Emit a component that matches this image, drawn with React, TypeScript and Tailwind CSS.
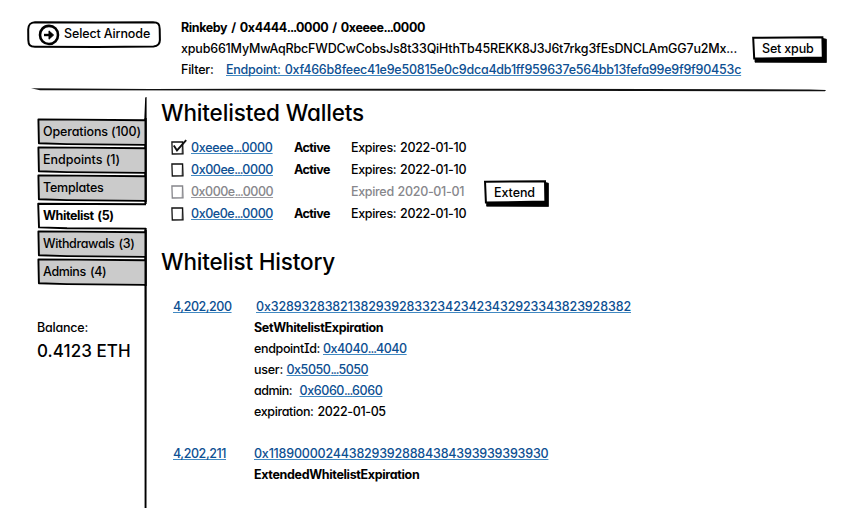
import type { ReactNode } from "react";

// Shortened hashes keep their dots tighter than the digits around them.
function Short({ children }: { children: string }) {
  return (
    <>
      {children.split("...").map((part, i) => (
        <span key={i}>
          {i > 0 && <span className="tracking-[-1.1px]">...</span>}
          {part}
        </span>
      ))}
    </>
  );
}

function Link({ children, className = "" }: { children: ReactNode; className?: string }) {
  return (
    <a
      className={`text-[#0d4f92] underline decoration-[#4189c2] decoration-1 underline-offset-[1px] [text-decoration-skip-ink:none] ${className}`}
    >
      {children}
    </a>
  );
}

function ArrowIcon() {
  return (
    <svg className="h-[22px] w-[22px] shrink-0" viewBox="0 0 22 22" fill="none" stroke="#000">
      <path d="M11 1.9C16.2 1.9 20 5.7 20 10.9C20 16 16.2 20 11 20C5.9 20 2 16.2 2 11C2 5.8 5.8 1.9 11 1.9Z" strokeWidth="2.6" />
      <path d="M6 11H14" strokeWidth="2.4" />
      <path d="M11 6.9L15.6 11L11 15.2Z" fill="#000" strokeWidth="1" strokeLinejoin="round" />
    </svg>
  );
}

function SketchButton({ children, className = "" }: { children: ReactNode; className?: string }) {
  return (
    <button className={`relative flex h-[27px] items-start ${className}`}>
      <svg className="absolute inset-0 h-full w-full" viewBox="0 0 75 27" preserveAspectRatio="none">
        <path d="M3 21L70 22L71 2.5L74.4 3.2V26.5L3 26.2Z" fill="#000" stroke="#000" strokeWidth="0.8" />
        <path d="M1.2 1.8L70.4 1.3L70.8 21.6L2.2 22.6Z" fill="#fff" stroke="#000" strokeWidth="2" vectorEffect="non-scaling-stroke" />
      </svg>
      <span className="relative top-px leading-[24px]">{children}</span>
    </button>
  );
}

function Tab({ label, active = false, className }: { label: string; active?: boolean; className: string }) {
  return (
    <div className="relative h-[28px]">
      <svg className="absolute inset-0 h-[28px] w-[112px]" viewBox="0 0 112 28">
        {active ? (
          <>
            <rect x="106" y="2" width="6" height="24" fill="#fff" />
            <path d="M109 2.2L1.2 1.8L2 25.4L30 26.2L109 26.6" fill="#fff" stroke="#000" strokeWidth="1.9" strokeLinejoin="round" />
          </>
        ) : (
          <>
            <path d="M108 2.2L40 1.6L1.4 1.4L1.9 25.2L30 26.1L108 26.9" fill="#cbcbcb" stroke="#000" strokeWidth="1.9" strokeLinejoin="round" />
            <path d="M108.6 0V28" stroke="#000" strokeWidth="2.2" />
          </>
        )}
      </svg>
      <span className={`relative block pl-[6px] leading-[28px] ${className}`}>{label}</span>
    </div>
  );
}

function Checkbox({ checked = false, muted = false }: { checked?: boolean; muted?: boolean }) {
  return (
    <svg className="h-[18px] w-[20px] shrink-0" viewBox="0.6 0 20 18" fill="none" stroke={muted ? "#85858a" : "#111"}>
      <path d="M1.5 5L12.2 4.8L12.6 16.8L1.9 17Z" strokeWidth="1.3" />
      <path d="M12 5L11.6 17" strokeWidth="0.6" />
      {checked && <path d="M3.4 8.4L6.6 13.4L15.8 3.2" strokeWidth="1.9" />}
    </svg>
  );
}

const wallets = [
  { id: "0xeeee...0000", active: true, checked: true, expiry: "Expires: 2022-01-10", tracking: "tracking-[-0.29px]" },
  { id: "0x00ee...0000", active: true, checked: false, expiry: "Expires: 2022-01-10", tracking: "tracking-[-0.43px]" },
  { id: "0x000e...0000", active: false, checked: false, expiry: "Expired 2020-01-01", tracking: "tracking-[-0.49px]" },
  { id: "0x0e0e...0000", active: true, checked: false, expiry: "Expires: 2022-01-10", tracking: "tracking-[-0.43px]" },
];

export default function App() {
  return (
    <div className="flex h-[508px] w-[866px] flex-col overflow-hidden bg-white font-['Inter','Liberation_Sans',sans-serif] text-[12.5px] leading-[21px] font-medium whitespace-nowrap text-black [font-feature-settings:'cv11']">
      <header className="flex h-[88px] shrink-0 items-start pl-[27px]">
        <button className="relative mt-[21px] flex h-[27px] w-[134px] items-center pl-[10.5px]">
          <svg className="absolute inset-0 h-[27px] w-[134px]" viewBox="0 0 134 27" fill="none" stroke="#000" strokeWidth="2">
            <path d="M8 1.2L70 1.6L126 1.2C131 1.3 132.8 3 132.7 8L132.9 19C132.8 23.5 131 25.2 126.5 25.4L70 26L8 25.8C3 25.7 1.4 24 1.3 19L1.2 8.5C1.4 3.5 3 1.4 8 1.2Z" />
          </svg>
          <ArrowIcon />
          <span className="relative -top-px ml-[4.5px] leading-[25px] tracking-[-0.13px]">Select Airnode</span>
        </button>
        <div className="mt-[17px] ml-[20px] w-[571px]">
          <div className="font-bold tracking-[-0.4px] [word-spacing:1.5px]">
            <Short>Rinkeby / 0x4444...0000 / 0xeeee...0000</Short>
          </div>
          <div className="tracking-[-0.185px]">xpub661MyMwAqRbcFWDCwCobsJs8t33QiHthTb45REKK8J3J6t7rkg3fEsDNCLAmGG7u2Mx...</div>
          <div className="flex">
            <span className="w-[45px] tracking-[-0.2px]">Filter:</span>
            <Link className="tracking-[-0.235px] [word-spacing:1px]">Endpoint: 0xf466b8feec41e9e50815e0c9dca4db1ff959637e564bb13fefa99e9f9f90453c</Link>
          </div>
        </div>
        <SketchButton className="mt-[36px] w-[75px] pl-[10px] tracking-[-0.17px]">Set xpub</SketchButton>
      </header>

      <svg className="ml-[30px] h-[4px] w-[798px] shrink-0" viewBox="0 0 798 4">
        <path d="M1 0.3L120 0.9L500 0.8L780 1.4L796 2L795 3.2L780 3.3L400 2.7L10 2.2Z" fill="#111" />
      </svg>

      <div className="flex min-h-0 flex-1">
        <aside className="flex w-[148px] shrink-0 pt-[5px] pl-[37px]">
          <div className="w-[107px] shrink-0">
            <nav className="relative z-10 pt-[21px]">
              <Tab label="Operations (100)" className="tracking-[-0.13px]" />
              <Tab label="Endpoints (1)" className="tracking-[-0.02px]" />
              <Tab label="Templates" className="tracking-[-0.21px]" />
              <Tab label="Whitelist (5)" active className="font-bold tracking-[-0.4px] [word-spacing:1px]" />
              <Tab label="Withdrawals (3)" className="tracking-[-0.35px] [word-spacing:1px]" />
              <Tab label="Admins (4)" className="tracking-[-0.35px] [word-spacing:1px]" />
            </nav>
            <div className="mt-[31px] tracking-[-0.21px]">Balance:</div>
            <div className="mt-[1px] text-[17px] leading-[24px] tracking-[0.05px]">0.4123 ETH</div>
          </div>
          <svg className="h-[411px] w-[4px] shrink-0" viewBox="0 0 4 411">
            <path d="M1.2 0.5L2.6 0L2.7 200L2.5 411H0.6L0.5 200L0.4 20Z" fill="#000" />
          </svg>
        </aside>

        <main className="flex-1 pt-[7px] pl-[13px]">
          <h1 className="text-[22.5px] leading-[28px] tracking-[-0.15px]">Whitelisted Wallets</h1>
          <section className="mt-[10px] flex pl-[10px]">
            <div className="w-[313px]">
              {wallets.map((w) => (
                <div key={w.id} className={`flex h-[22px] items-start ${w.active ? "" : "text-[#87878c]"}`}>
                  <Checkbox checked={w.checked} muted={!w.active} />
                  <div className="w-[103px]">
                    <Link className={`${w.tracking} ${w.active ? "" : "text-[#87878c]! decoration-[#9a9aa0]!"}`}>
                      <Short>{w.id}</Short>
                    </Link>
                  </div>
                  <div className="w-[57px] font-bold tracking-[-0.55px]">{w.active ? "Active" : ""}</div>
                  <div className="tracking-[-0.32px] [word-spacing:0.8px]">{w.expiry}</div>
                </div>
              ))}
            </div>
            <SketchButton className="mt-[43px] w-[65px] pl-[10px] tracking-[-0.07px]">Extend</SketchButton>
          </section>

          <h2 className="mt-[22px] text-[22.5px] leading-[29px] tracking-[-0.18px]">Whitelist History</h2>
          <section className="mt-[20px] grid grid-cols-[81px_1fr] gap-y-[21px] pl-[12px]">
            <div>
              <Link className="tracking-[-0.46px]">4,202,200</Link>
            </div>
            <div>
              <div className="pl-[2px]">
                <Link className="tracking-[-0.12px]">0x32893283821382939283323423423432923343823928382</Link>
              </div>
              <div className="font-bold tracking-[-0.34px]">SetWhitelistExpiration</div>
              <div className="flex">
                <span className="w-[69px] tracking-[-0.36px]">
                  endpoint<span className="[font-feature-settings:'cv08']">I</span>d:
                </span>
                <Link className="tracking-[-0.46px]">
                  <Short>0x4040...4040</Short>
                </Link>
              </div>
              <div className="flex">
                <span className="w-[32.5px] tracking-[-0.24px]">user:</span>
                <Link className="tracking-[-0.46px]">
                  <Short>0x5050...5050</Short>
                </Link>
              </div>
              <div className="flex">
                <span className="w-[45.5px] tracking-[-0.5px]">admin:</span>
                <Link className="tracking-[-0.4px]">
                  <Short>0x6060...6060</Short>
                </Link>
              </div>
              <div className="tracking-[-0.36px] [word-spacing:1px]">expiration: 2022-01-05</div>
            </div>
            <div>
              <Link className="tracking-[-0.43px]">4,202,211</Link>
            </div>
            <div>
              <Link className="tracking-[-0.2px]">0x1189000024438293928884384393939393930</Link>
              <div className="font-bold tracking-[-0.34px]">ExtendedWhitelistExpiration</div>
            </div>
          </section>
        </main>
      </div>
    </div>
  );
}
